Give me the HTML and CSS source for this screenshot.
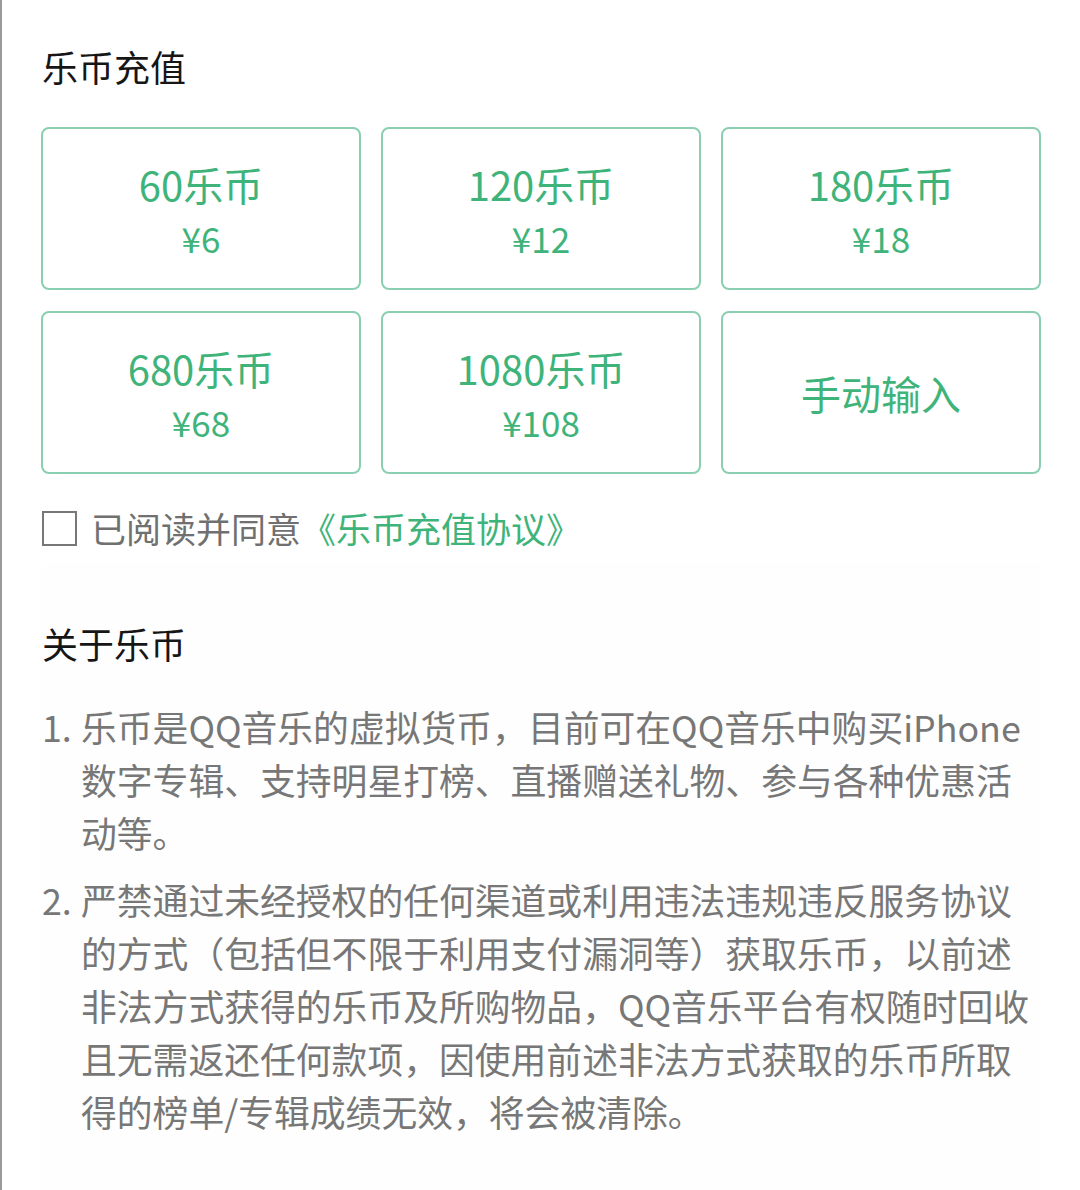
FILE: index.html
```html
<!DOCTYPE html>
<html>
    <head>
        <meta charset="utf-8">
        <link rel="stylesheet" href="styles.css">
    </head>
    <body>
        <div class="page">
            <h2 class="title">乐币充值</h2>
            <div class="packs">
                <div class="pack">
                    <div class="coins">60乐币</div>
                    <div class="price">¥6</div>
                </div>
                <div class="pack">
                    <div class="coins">120乐币</div>
                    <div class="price">¥12</div>
                </div>
                <div class="pack">
                    <div class="coins">180乐币</div>
                    <div class="price">¥18</div>
                </div>
                <div class="pack">
                    <div class="coins">680乐币</div>
                    <div class="price">¥68</div>
                </div>
                <div class="pack">
                    <div class="coins">1080乐币</div>
                    <div class="price">¥108</div>
                </div>
                <div class="pack">
                    <div class="coins">手动输入</div>
                </div>
            </div>
            <label class="agree">
                <span class="box"></span>
                <span>已阅读并同意<a class="link">《乐币充值协议》</a></span>
            </label>
            <div class="about">
                <h2 class="title">关于乐币</h2>
                <ol class="rules">
                    <li>
                        <span class="num">1.</span>
                        <span class="text">乐币是QQ音乐的虚拟货币，目前可在QQ音乐中购买iPhone<br>数字专辑、支持明星打榜、直播赠送礼物、参与各种优惠活<br>动等。</span>
                    </li>
                    <li>
                        <span class="num">2.</span>
                        <span class="text">严禁通过未经授权的任何渠道或利用违法违规违反服务协议<br>的方式（包括但不限于利用支付漏洞等）获取乐币，以前述<br>非法方式获得的乐币及所购物品，QQ音乐平台有权随时回收<br>且无需返还任何款项，因使用前述非法方式获取的乐币所取<br>得的榜单/专辑成绩无效，将会被清除。</span>
                    </li>
                </ol>
            </div>
        </div>
    </body>
</html>
```

FILE: styles.css
```css
body {
    margin: 0;
    background-color: white;
    font-family: "Noto Sans CJK SC", "Noto Sans", sans-serif;
}
.page {
    min-height: 1190px;
    box-sizing: border-box;
    border-left: 2px solid #9a9a9a;
    padding: 41px 39px 0 39px;
}
.title {
    margin: 0 0 0 1px;
    font-size: 36px;
    line-height: 50px;
    font-weight: normal;
    color: #161616;
}
.packs {
    display: grid;
    grid-template-columns: repeat(3, 1fr);
    grid-auto-rows: 163px;
    column-gap: 20px;
    row-gap: 21px;
    margin-top: 36px;
}
.pack {
    display: flex;
    flex-direction: column;
    justify-content: center;
    align-items: center;
    border: 2px solid #8ad0b0;
    border-radius: 8px;
    color: #3fb47a;
}
.pack .coins {
    font-size: 40px;
    line-height: 54px;
}
.pack .price {
    margin-top: 4px;
    font-size: 35px;
    line-height: 46px;
}
.agree {
    display: flex;
    align-items: center;
    margin: 34px 0 0 1px;
    font-size: 35px;
    line-height: 40px;
    color: #707070;
}
.agree .box {
    width: 31px;
    height: 31px;
    border: 2px solid #777;
    margin-right: 14px;
}
.agree .link {
    color: #3fb47a;
}
.about {
    margin-top: 14px;
    padding-top: 56px;
    padding-bottom: 40px;
    background-color: #fefefe;
}
.rules {
    margin: 32px 0 0 1px;
    padding: 0;
    list-style: none;
    font-size: 35.8px;
    line-height: 53px;
    color: #777;
}
.rules li {
    display: flex;
    margin-bottom: 14px;
}
.rules .num {
    flex: none;
    width: 39px;
}
.rules .text {
    white-space: nowrap;
}
```
